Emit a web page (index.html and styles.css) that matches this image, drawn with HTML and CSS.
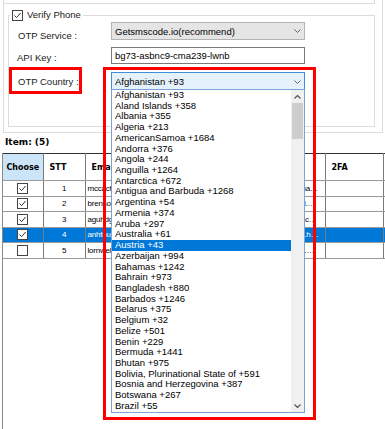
FILE: index.html
```html
<!DOCTYPE html>
<html lang="en">
<head>
    <meta charset="UTF-8">
    <meta name="viewport" content="width=device-width, initial-scale=1.0">
    <title>Verify Phone</title>
    <link rel="stylesheet" href="styles.css">
</head>
<body>
    <div class="page">
        <div class="settings">
            <div class="prev-box"></div>
            <fieldset class="group">
                <legend class="group-title">
                    <span class="cb"><svg width="9" height="9" viewBox="0 0 9 9"><path d="M1.5 4.5 L3.6 6.6 L7.6 2" fill="none" stroke="#333" stroke-width="1"/></svg></span>
                    <span>Verify Phone</span>
                </legend>
                <div class="form-row">
                    <label class="lbl lbl-service">OTP Service :</label>
                    <div class="combo">
                        <span>Getsmscode.io(recommend)</span>
                        <svg class="chev" width="7" height="4" viewBox="0 0 7 4"><path d="M0.5 0.5 L3.5 3.5 L6.5 0.5" fill="none" stroke="#666" stroke-width="1"/></svg>
                    </div>
                </div>
                <div class="form-row row-key">
                    <label class="lbl lbl-key">API Key :</label>
                    <div class="textbox">bg73-asbnc9-cma239-lwnb</div>
                </div>
                <div class="form-row row-country">
                    <label class="lbl lbl-country">OTP Country :</label>
                    <div class="combo combo-open">
                        <span>Afghanistan +93</span>
                        <svg class="chev" width="7" height="4" viewBox="0 0 7 4"><path d="M0.5 0.5 L3.5 3.5 L6.5 0.5" fill="none" stroke="#666" stroke-width="1"/></svg>
                    </div>
                </div>
            </fieldset>
        </div>

        <div class="items-title">Item: (5)</div>

        <div class="grid-wrap">
            <table class="grid">
                <colgroup>
                    <col class="c-choose">
                    <col class="c-stt">
                    <col class="c-email">
                    <col class="c-pass">
                    <col class="c-2fa">
                    <col class="c-more">
                </colgroup>
                <thead>
                    <tr>
                        <th class="th-choose">Choose</th>
                        <th>STT</th>
                        <th>Email</th>
                        <th>Recovery</th>
                        <th>2FA</th>
                        <th></th>
                    </tr>
                </thead>
                <tbody>
                    <tr>
                        <td class="td-check"><span class="cb"><svg width="9" height="9" viewBox="0 0 9 9"><path d="M1.5 4.5 L3.6 6.6 L7.6 2" fill="none" stroke="#333"/></svg></span></td>
                        <td class="td-num">1</td>
                        <td>mccactus9285@gmail.com</td>
                        <td>mccactus9285recovery@hotmail.comboxbo</td>
                        <td></td>
                        <td></td>
                    </tr>
                    <tr>
                        <td class="td-check"><span class="cb"><svg width="9" height="9" viewBox="0 0 9 9"><path d="M1.5 4.5 L3.6 6.6 L7.6 2" fill="none" stroke="#333"/></svg></span></td>
                        <td class="td-num">2</td>
                        <td>brensonkim72@gmail.com</td>
                        <td>brensonkim72recovery@gmail.com.vnn</td>
                        <td></td>
                        <td></td>
                    </tr>
                    <tr>
                        <td class="td-check"><span class="cb"><svg width="9" height="9" viewBox="0 0 9 9"><path d="M1.5 4.5 L3.6 6.6 L7.6 2" fill="none" stroke="#333"/></svg></span></td>
                        <td class="td-num">3</td>
                        <td>aguhdgfhr31@gmail.com</td>
                        <td>aguhdgfhr31recovery@yahoo.co.ukbo</td>
                        <td></td>
                        <td></td>
                    </tr>
                    <tr class="selected">
                        <td class="td-check"><span class="cb"><svg width="9" height="9" viewBox="0 0 9 9"><path d="M1.5 4.5 L3.6 6.6 L7.6 2" fill="none" stroke="#333"/></svg></span></td>
                        <td class="td-num">4</td>
                        <td>anhthu1992@gmail.com</td>
                        <td>anhthu1992recovery@hotmail.hotmail</td>
                        <td></td>
                        <td></td>
                    </tr>
                    <tr>
                        <td class="td-check"><span class="cb"></span></td>
                        <td class="td-num">5</td>
                        <td>lornwelch88@gmail.com</td>
                        <td>lornwelch88recovery@outlook.mailil</td>
                        <td></td>
                        <td></td>
                    </tr>
                </tbody>
            </table>
        </div>

        <div class="dropdown">
            <ul class="options">
                <li>Afghanistan +93</li>
                <li>Aland Islands +358</li>
                <li>Albania +355</li>
                <li>Algeria +213</li>
                <li>AmericanSamoa +1684</li>
                <li>Andorra +376</li>
                <li>Angola +244</li>
                <li>Anguilla +1264</li>
                <li>Antarctica +672</li>
                <li>Antigua and Barbuda +1268</li>
                <li>Argentina +54</li>
                <li>Armenia +374</li>
                <li>Aruba +297</li>
                <li>Australia +61</li>
                <li class="active">Austria +43</li>
                <li>Azerbaijan +994</li>
                <li>Bahamas +1242</li>
                <li>Bahrain +973</li>
                <li>Bangladesh +880</li>
                <li>Barbados +1246</li>
                <li>Belarus +375</li>
                <li>Belgium +32</li>
                <li>Belize +501</li>
                <li>Benin +229</li>
                <li>Bermuda +1441</li>
                <li>Bhutan +975</li>
                <li>Bolivia, Plurinational State of +591</li>
                <li>Bosnia and Herzegovina +387</li>
                <li>Botswana +267</li>
                <li>Brazil +55</li>
            </ul>
            <div class="scrollbar">
                <div class="sb-btn"><svg width="7" height="4" viewBox="0 0 7 4"><path d="M0.5 3.5 L3.5 0.5 L6.5 3.5" fill="none" stroke="#555" stroke-width="1.2"/></svg></div>
                <div class="sb-thumb"></div>
                <div class="sb-track"></div>
                <div class="sb-btn"><svg width="7" height="4" viewBox="0 0 7 4"><path d="M0.5 0.5 L3.5 3.5 L6.5 0.5" fill="none" stroke="#555" stroke-width="1.2"/></svg></div>
            </div>
        </div>

        <div class="mark mark-label"></div>
        <div class="mark mark-combo"></div>
    </div>
</body>
</html>
```

FILE: styles.css
```css
* {
    box-sizing: border-box;
}

body {
    margin: 0;
    font-family: "Liberation Sans", Arial, sans-serif;
    font-size: 9.5px;
    color: #000;
    background-color: #fff;
}

.page {
    position: relative;
    width: 385px;
    height: 429px;
    overflow: hidden;
}

/* top settings panel */
.settings {
    height: 133px;
    margin: 0 2px 0 3px;
    padding: 0 7px 0 4px;
    border: 1px solid #dcdcdc;
    border-top: none;
}

.prev-box {
    height: 4px;
    margin-left: -4px;
    border-right: 1px solid #dcdcdc;
    border-bottom: 1px solid #dcdcdc;
}

.group {
    margin: 5px 0 0 0;
    padding: 1px 0 35px 9px;
    border: 1px solid #dcdcdc;
    min-width: 0;
}

.group-title {
    display: flex;
    align-items: center;
    gap: 4px;
    height: 12px;
    margin-left: -8px;
    padding: 0 2px;
    line-height: 12px;
    font-size: 9.5px;
    color: #222;
}

.form-row {
    display: flex;
    align-items: flex-start;
}

.row-key {
    margin-top: 5px;
}

.row-country {
    margin-top: 8px;
}

.lbl {
    width: 93px;
    line-height: 12px;
    font-size: 9.5px;
    color: #222;
}

.lbl-service {
    padding-top: 8px;
}

.lbl-key {
    padding-top: 5px;
    margin-left: -1px;
    margin-right: 1px;
}

.lbl-country {
    padding-top: 4px;
}

.combo {
    display: flex;
    align-items: center;
    justify-content: space-between;
    width: 194px;
    height: 18px;
    padding: 0 3px 0 3px;
    background-color: #e5e5e5;
    border: 1px solid #b4b4b4;
}

.combo-open {
    height: 19px;
    background-color: #e5f1fb;
    border-color: #3c8fd8;
}

.textbox {
    width: 194px;
    height: 17px;
    padding: 0 3px;
    line-height: 15px;
    border: 1px solid #7a7a7a;
    background-color: #fff;
}

.chev {
    display: block;
}

/* item list */
.items-title {
    height: 20px;
    padding: 3px 0 0 5px;
    line-height: 12px;
    font-family: "DejaVu Sans", Verdana, sans-serif;
    font-weight: bold;
    font-size: 9px;
}

.grid-wrap {
    height: 276px;
    margin-left: 2px;
    border-left: 1px solid #8a8a8a;
}

.grid {
    width: 450px;
    table-layout: fixed;
    border-collapse: collapse;
    border-top: 1px solid #333;
}

.c-choose { width: 40px; }
.c-stt { width: 42px; }
.c-email { width: 115px; }
.c-pass { width: 125px; }
.c-2fa { width: 58px; }
.c-more { width: 70px; }

.grid th {
    height: 27px;
    padding: 0 6px;
    text-align: left;
    font-family: "DejaVu Sans", Verdana, sans-serif;
    font-weight: bold;
    font-size: 8px;
    border-right: 1px solid #7a7a7a;
    border-bottom: 1px solid #9a9a9a;
    white-space: nowrap;
    overflow: hidden;
}

.grid .th-choose {
    padding: 0;
    text-align: center;
    background-color: #cce4f7;
}

.grid td {
    height: 15.5px;
    padding: 0 6px 0 2px;
    font-size: 8px;
    letter-spacing: -0.2px;
    border-right: 1px solid #7a7a7a;
    border-bottom: 1px solid #9a9a9a;
    white-space: nowrap;
    overflow: hidden;
    text-overflow: ellipsis;
}

.grid .td-check,
.grid .td-num {
    padding: 0;
    text-align: center;
}

.grid .selected td {
    background-color: #0078d7;
    color: #fff;
}

.cb {
    display: inline-flex;
    align-items: center;
    justify-content: center;
    width: 11px;
    height: 11px;
    border: 1px solid #444;
    background-color: #fff;
    vertical-align: middle;
}

.cb svg {
    display: block;
}

/* open dropdown of OTP Country */
.dropdown {
    position: absolute;
    left: 111px;
    top: 89px;
    width: 194px;
    height: 324px;
    display: flex;
    background-color: #fff;
    border: 1px solid #7aa4d6;
}

.options {
    flex: 1;
    margin: 0;
    padding: 0;
    list-style: none;
    min-width: 0;
}

.options li {
    height: 10.72px;
    padding-left: 3px;
    line-height: 10.72px;
    white-space: nowrap;
    overflow: hidden;
}

.options .active {
    background-color: #0078d7;
    color: #fff;
}

.scrollbar {
    width: 13px;
    display: flex;
    flex-direction: column;
    background-color: #f0f0f0;
}

.sb-btn {
    height: 13px;
    display: flex;
    align-items: center;
    justify-content: center;
}

.sb-thumb {
    height: 36px;
    margin: 0 1px;
    background-color: #cdcdcd;
}

.sb-track {
    flex: 1;
}

/* red annotation frames */
.mark {
    position: absolute;
    border: 3px solid #ff0000;
}

.mark-label {
    left: 9px;
    top: 67px;
    width: 73px;
    height: 27px;
}

.mark-combo {
    left: 103px;
    top: 67px;
    width: 213px;
    height: 353px;
}
```
